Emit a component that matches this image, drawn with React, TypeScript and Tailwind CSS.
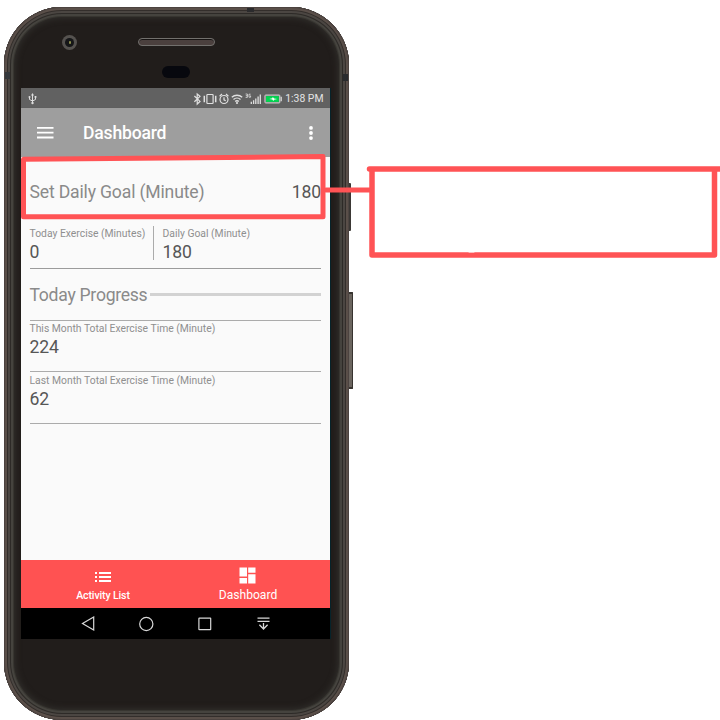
import React from "react";

function Stat({ label, value }: { label: string; value: string }) {
  return (
    <div>
      <div className="text-[10.35px] leading-[14px] text-[#8f8f8f] whitespace-nowrap">{label}</div>
      <div className="text-[17.6px] leading-[22px] tracking-[-0.15px] text-[#565656]">{value}</div>
    </div>
  );
}

function StatusBar() {
  return (
    <div className="flex h-[20px] shrink-0 items-center justify-between bg-[#616161] pl-[7px] pr-[6.5px] pt-[1px] text-[#e4e4e4]">
      <svg width="9" height="12" viewBox="0 0 9 12" fill="none" stroke="#dedede" strokeWidth="1">
        <path d="M4.5 2v8M1.5 4v2.5l3 1.5l3-1.5V4" />
        <path d="M4.5 0L6 2.5H3z" fill="#dedede" stroke="none" />
        <circle cx="4.5" cy="10" r="1.2" fill="#dedede" stroke="none" />
        <circle cx="1.5" cy="4" r="1" fill="#dedede" stroke="none" />
        <path d="M6.6 3h1.8v1.8H6.6z" fill="#dedede" stroke="none" />
      </svg>
      <div className="flex items-center">
        <svg width="90" height="14" viewBox="0 0 90 14" fill="none" stroke="#e0e0e0" strokeWidth="1.2" className="mr-[3px]">
          <path d="M2.4 4L8 9.4L5.2 12V2L8 4.4L2.4 9.8" />
          <rect x="14.9" y="2.5" width="6.2" height="9" rx="0.7" />
          <path d="M12.3 3.8v6.4M23.7 3.8v6.4" strokeWidth="1.5" />
          <circle cx="32" cy="7.5" r="4" />
          <path d="M32 5.2v2.6l1.7 1M27.6 4.2l2.4-2.2M36.4 4.2l-2.4-2.2" />
          <path d="M39.8 5.3a7.6 7.6 0 0 1 10.4 0M41.5 7.5a5 5 0 0 1 7 0M43.2 9.5a2.5 2.5 0 0 1 3.6 0" strokeWidth="1.3" />
          <circle cx="45" cy="11" r="1.1" fill="#e0e0e0" stroke="none" />
          <path d="M53.6 2h1.8v3.4h-1.8M53.8 3.7h1.6M58.6 2.2H57v3h1.6V3.9h-.7" strokeWidth="0.8" />
          <path d="M59.3 9.8V12M61.6 8.2v3.8M63.8 6.4V12M66.1 4.5V12M68.3 2.5V12" strokeWidth="1.3" />
          <rect x="73" y="3.1" width="14.8" height="7.8" rx="0.6" strokeWidth="1" />
          <rect x="74" y="4.1" width="12.8" height="5.8" fill="#00d750" stroke="none" />
          <path d="M89.2 4.8v4.4" />
          <path d="M77.2 7l3.1-.7l.5-1.3l1.3 1.4l3.1.6l-3.1.7l-.8 1.3l-1-1.4z" fill="#fff" stroke="none" />
        </svg>
        <span className="text-[10.4px] leading-[14px] whitespace-nowrap">1:38 PM</span>
      </div>
    </div>
  );
}

function AppBar() {
  return (
    <div className="flex h-[49px] shrink-0 items-center bg-[#9e9e9e] pl-4 pr-[17px] shadow-[0_1px_2px_rgba(0,0,0,0.25)]">
      <svg width="17" height="12" viewBox="0 0 17 12" fill="#fff">
        <path d="M0 0h16.5v1.8H0zM0 4.8h16.5v1.8H0zM0 9.6h16.5v1.8H0z" />
      </svg>
      <h1 className="ml-[29px] flex-1 text-[17.6px] leading-[22px] tracking-[-0.2px] font-medium text-white">Dashboard</h1>
      <svg width="4" height="14" viewBox="0 0 4 14" fill="#fff">
        <circle cx="2" cy="1.9" r="1.9" />
        <circle cx="2" cy="7" r="1.9" />
        <circle cx="2" cy="12.1" r="1.9" />
      </svg>
    </div>
  );
}

function Content() {
  return (
    <main className="flex flex-1 flex-col bg-[#fafafa] pl-[8.5px] pr-[9px]">
      <div className="flex h-[68px] items-center justify-between pt-[2px] text-[17.6px] leading-[22px] tracking-[-0.17px]">
        <span className="whitespace-nowrap text-[#8a8a8a]">Set Daily Goal (Minute)</span>
        <span className="text-[#565656]">180</span>
      </div>
      <div className="flex h-[44px] border-b border-[#9b9b9b]">
        <div className="mt-px h-[34px] w-[124px] border-r border-[#ababab] pt-[1px]">
          <Stat label="Today Exercise (Minutes)" value="0" />
        </div>
        <div className="mt-px pl-[9px] pt-[1px]">
          <Stat label="Daily Goal (Minute)" value="180" />
        </div>
      </div>
      <div className="flex h-[52px] items-center border-b border-[#ababab]">
        <span className="whitespace-nowrap text-[17.6px] leading-[22px] tracking-[-0.28px] text-[#8a8a8a]">Today Progress</span>
        <div className="ml-[3px] h-[3px] flex-1 bg-[#d2d2d2]" />
      </div>
      <div className="h-[51px] border-b border-[#ababab] pt-[1px]">
        <Stat label="This Month Total Exercise Time (Minute)" value="224" />
      </div>
      <div className="h-[52px] border-b border-[#ababab] pt-[2px]">
        <Stat label="Last Month Total Exercise Time (Minute)" value="62" />
      </div>
    </main>
  );
}

function BottomTabs() {
  return (
    <div className="flex h-[48px] shrink-0 bg-[#ff5252] text-white">
      <div className="flex w-[164px] flex-col items-center pt-[12px]">
        <svg width="16" height="10" viewBox="0 0 16 10" fill="#fff">
          <path d="M0 .1h2v1.8H0zM4 .1h12v1.8H4zM0 4.1h2v1.8H0zM4 4.1h12v1.8H4zM0 8.1h2v1.8H0zM4 8.1h12v1.8H4z" />
        </svg>
        <span className="mt-[7px] text-[10.6px] leading-[14px] tracking-[-0.15px] font-medium whitespace-nowrap">Activity List</span>
      </div>
      <div className="flex flex-1 flex-col items-center pt-[7px] pr-[19px]">
        <svg width="17" height="17" viewBox="0 0 17 17" fill="#fff" className="ml-[-1px]">
          <path d="M.5.5H8v9H.5zM9.2.5h7.3v5.3H9.2zM.5 11H8v5.5H.5zM9.2 7.3h7.3v9.2H9.2z" />
        </svg>
        <span className="mt-[4px] text-[12.1px] leading-[14px] whitespace-nowrap">Dashboard</span>
      </div>
    </div>
  );
}

function NavBar() {
  return (
    <div className="flex h-[31px] shrink-0 items-center bg-black pl-[60px]">
      <svg width="14" height="15" viewBox="0 0 14 15" fill="none" stroke="#d8d8d8" strokeWidth="1.2">
        <path d="M12.7 1v13L1.5 7.5z" />
      </svg>
      <svg width="16" height="16" viewBox="0 0 16 16" fill="none" stroke="#d8d8d8" strokeWidth="1.2" className="ml-[43px]">
        <circle cx="8.3" cy="8" r="6.6" />
      </svg>
      <svg width="14" height="14" viewBox="0 0 14 14" fill="none" stroke="#d8d8d8" strokeWidth="1.2" className="ml-[44px]">
        <rect x="0.9" y="1.1" width="11.8" height="11.6" rx="0.5" />
      </svg>
      <svg width="13" height="14" viewBox="0 0 13 14" fill="none" stroke="#d8d8d8" strokeWidth="1.3" className="ml-[45px]">
        <path d="M.5 1.2h12M.5 4.3h12M6.5 6v6M2.4 7.8l4.1 4.2l4.1-4.2" />
      </svg>
    </div>
  );
}

function Phone() {
  return (
    <div className="relative h-[713px] w-[345px] shrink-0">
      <div className="absolute left-[343px] top-[176px] h-[48px] w-[4.5px] rounded-r-[1px] bg-[#3b3835]" />
      <div className="absolute left-[344px] top-[285px] h-[97px] w-[5px] rounded-r-[1px] border-y-2 border-r border-[#37332f] bg-[#6b655f]" />
      <div className="relative flex h-full w-full flex-col rounded-[58px] bg-[#211d1b] pl-[17.5px] shadow-[inset_0_0_0_1px_#4c4340,inset_0_0_0_3px_#5a4f49,inset_0_0_0_4px_#332e2b,inset_0_0_0_6px_#4b4642,inset_0_0_0_7px_#2d2a27,inset_0_0_0_9px_#45433e,inset_0_0_0_10px_#373530,inset_0_0_6px_11px_#32302d]">
        <div className="relative h-[81px] w-full shrink-0">
          <div className="absolute left-[41px] top-[28px] flex h-[15px] w-[15px] items-center justify-center rounded-full bg-[#55524f]">
            <div className="flex h-[9px] w-[9px] items-center justify-center rounded-full bg-[#151618]">
              <div className="h-[3px] w-[2px] rounded-full bg-[#8b8e4b]" />
            </div>
          </div>
          <div className="absolute left-[117px] top-[31px] h-[8px] w-[77px] rounded-full border border-[#72706d] bg-[#4b403e] shadow-[inset_0_1px_0_#171413]" />
          <div className="absolute left-[141px] top-[59px] h-[12px] w-[28px] rounded-full bg-[#07080e]" />
        </div>
        <div className="flex h-[551px] w-[309px] flex-col overflow-hidden shadow-[1px_0_0_#06232a]">
          <StatusBar />
          <AppBar />
          <Content />
          <BottomTabs />
          <NavBar />
        </div>
      </div>
      <div className="absolute left-[1px] top-[65px] h-[7px] w-[5px] bg-[#35383c]" />
      <div className="absolute left-[339px] top-[67px] h-[7px] w-[5px] bg-[#292b2e]" />
      <div className="absolute left-[243px] top-[1px] h-[4px] w-[7px] bg-[#2b2b2d]" />
    </div>
  );
}

/* Hand-drawn marker outline linking the goal row to an empty note box. */
function Callout() {
  return (
    <svg
      className="absolute left-0 top-0"
      width="720"
      height="720"
      viewBox="0 0 720 720"
      fill="none"
      stroke="#ff5355"
      strokeWidth="5"
      strokeLinecap="round"
      strokeLinejoin="round"
    >
      <path d="M23.5 159.3L323 156.5V216.8L23.5 216.8Z" />
      <path d="M326 190H370" />
      <path d="M369.5 169H722M372 169V255H714.5V170" strokeWidth="5.5" />
      <path d="M469 252h5" stroke="#fff" strokeWidth="1" />
    </svg>
  );
}

export default function App() {
  return (
    <div className="relative h-[720px] w-[720px] overflow-hidden bg-white pl-[3.5px] pt-[7px] font-['Roboto',sans-serif]">
      <Phone />
      <Callout />
    </div>
  );
}
